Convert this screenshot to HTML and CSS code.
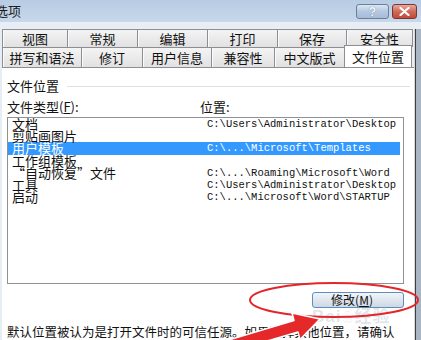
FILE: index.html
```html
<!DOCTYPE html>
<html>

<head>
    <meta charset="UTF-8">
    <title>选项</title>
    <link rel="stylesheet" href="styles.css">
</head>

<body>
    <div class="window">
        <div class="titlebar">
            <span class="title">选项</span>
            <div class="caption">
                <span class="cap-btn help">?</span>
                <span class="cap-btn close">
                    <svg width="11" height="9" viewBox="0 0 11 9"><path d="M1.5 1 L9.5 8 M9.5 1 L1.5 8" stroke="#fff" stroke-width="2.2" stroke-linecap="round"/></svg>
                </span>
            </div>
        </div>
        <div class="frame">
            <div class="client">
                <div class="tab-row row1">
                    <span class="tab w66">视图</span>
                    <span class="tab w70">常规</span>
                    <span class="tab w70">编辑</span>
                    <span class="tab w70">打印</span>
                    <span class="tab w69">保存</span>
                    <span class="tab w66">安全性</span>
                </div>
                <div class="tab-row row2">
                    <span class="tab w80">拼写和语法</span>
                    <span class="tab w61">修订</span>
                    <span class="tab w69">用户信息</span>
                    <span class="tab w63">兼容性</span>
                    <span class="tab w70">中文版式</span>
                    <span class="tab w68 active">文件位置</span>
                </div>
                <div class="panel">
                    <div class="group-title"><span>文件位置</span></div>
                    <div class="list-head">
                        <span class="col-type">文件类型(<u>F</u>):</span>
                        <span>位置:</span>
                    </div>
                    <div class="list">
                        <div class="row"><span class="type">文档</span><span class="path">C:\Users\Administrator\Desktop</span></div>
                        <div class="row"><span class="type">剪贴画图片</span><span class="path"></span></div>
                        <div class="row selected"><span class="type">用户模板</span><span class="path">C:\...\Microsoft\Templates</span></div>
                        <div class="row"><span class="type">工作组模板</span><span class="path"></span></div>
                        <div class="row"><span class="type">“自动恢复”文件</span><span class="path">C:\...\Roaming\Microsoft\Word</span></div>
                        <div class="row"><span class="type">工具</span><span class="path">C:\Users\Administrator\Desktop</span></div>
                        <div class="row"><span class="type">启动</span><span class="path">C:\...\Microsoft\Word\STARTUP</span></div>
                    </div>
                    <div class="actions">
                        <button class="modify">修改(<u>M</u>)</button>
                    </div>
                    <p class="note">默认位置被认为是打开文件时的可信任源。如果选择其他位置，请确认</p>
                </div>
            </div>
            <div class="edge"></div>
        </div>

        <div class="watermark">Bai<span class="paw">❀</span>经验</div>

        <svg class="markup" width="421" height="340" viewBox="0 0 421 340">
            <ellipse cx="334" cy="300" rx="84" ry="17" fill="none" stroke="#e3262a" stroke-width="2"/>
            <polygon points="222,342 294,320.5 292,313 320,319 300,339.6 298,332 226,353" fill="#e5292b" stroke="#fff" stroke-width="1.5" stroke-linejoin="round"/>
        </svg>
    </div>
</body>
</html>
```

FILE: styles.css
```css
* {
    box-sizing: border-box;
}
body {
    margin: 0;
    width: 421px;
    height: 340px;
    overflow: hidden;
    background: #ffffff;
    font-family: "Noto Sans CJK SC", "Liberation Sans", sans-serif;
    color: #111;
}
.window {
    position: relative;
    width: 421px;
    height: 340px;
    display: flex;
    flex-direction: column;
    background: #e6edf5;
}
.titlebar {
    height: 29px;
    display: flex;
    align-items: flex-start;
    justify-content: space-between;
    background: linear-gradient(#b7cbe3 0, #c8d8eb 22px, #e9eef5 22px);
}
.title {
    margin-left: -5px;
    font-size: 13px;
    line-height: 22px;
    color: #1b1b1b;
}
.caption {
    display: flex;
    gap: 3px;
    padding-top: 4px;
    padding-right: 4px;
}
.cap-btn {
    height: 15px;
    display: flex;
    align-items: center;
    justify-content: center;
    border: 1px solid #6d7f96;
    border-radius: 3px;
}
.help {
    width: 33px;
    background: linear-gradient(#dbe6f3, #b4c8e0 50%, #a6bcd8);
    color: #f4f7fb;
    font-family: "Liberation Sans", sans-serif;
    font-weight: bold;
    font-size: 12px;
    text-shadow: 0 0 1px #50698a;
}
.close {
    width: 25px;
    border-color: #7a3632;
    background: linear-gradient(#e9a99b, #cf6a58 50%, #c4493a);
}
.frame {
    flex: 1;
    display: flex;
}
.client {
    flex: 1;
    margin-left: 2px;
    display: flex;
    flex-direction: column;
    background: #e9eef5;
}
.edge {
    width: 7px;
    background: linear-gradient(to right, #d8d8d8 0 1px, #3f3f3f 1px 2px, #aab6c4 2px);
}
.tab-row {
    display: flex;
}
.row1 {
    height: 18px;
}
.row2 {
    height: 20px;
}
.tab {
    display: flex;
    align-items: center;
    justify-content: center;
    font-size: 13px;
    color: #111;
    background: linear-gradient(#f4f4f4, #e1e1e1);
    border-top: 1px solid #8c8e94;
    border-right: 1px solid #8c8e94;
    box-shadow: inset 1px 0 0 #fbfbfb;
}
.tab:first-child {
    border-left: 1px solid #8c8e94;
}
.tab.active {
    position: relative;
    z-index: 1;
    height: 22px;
    margin-top: -2px;
    background: #ffffff;
    border-left: 1px solid #8c8e94;
    margin-left: -1px;
    box-shadow: none;
}
.w61 { width: 61px; }
.w63 { width: 63px; }
.w66 { width: 66px; }
.w68 { width: 68px; }
.w69 { width: 69px; }
.w70 { width: 70px; }
.w80 { width: 80px; }
.panel {
    flex: 1;
    background: #ffffff;
    border-top: 1px solid #8c8e94;
    padding: 10px 0 0 5px;
}
.group-title {
    display: flex;
    align-items: center;
    gap: 8px;
    font-size: 13px;
    line-height: 16px;
    padding-right: 4px;
}
.group-title::after {
    content: "";
    flex: 1;
    height: 1px;
    background: #dcdfe3;
}
.list-head {
    display: flex;
    margin-top: 5px;
    font-size: 13px;
    line-height: 16px;
}
.list-head u {
    text-decoration: underline;
}
.col-type {
    width: 193px;
}
.list {
    width: 397px;
    height: 167px;
    margin-top: 2px;
    border: 1px solid #8e9197;
    padding-top: 0;
}
.row {
    display: flex;
    align-items: center;
    height: 12.2px;
    margin-right: 3px;
}
.type {
    width: 199px;
    padding-left: 4px;
    font-size: 13px;
    line-height: 12px;
    white-space: nowrap;
}
.path {
    font-family: "Liberation Mono", monospace;
    font-size: 10.5px;
    line-height: 12px;
    white-space: nowrap;
}
.selected {
    background: #3399ff;
    color: #ffffff;
}
.actions {
    width: 397px;
    display: flex;
    justify-content: flex-end;
    margin-top: 8px;
}
.modify {
    width: 92px;
    height: 16px;
    padding: 0 12px 0 0;
    border: 1px solid #5c8fbf;
    border-radius: 3px;
    background: linear-gradient(#f1f6fb, #dfe6ee 50%, #cfd8e2);
    font-family: "Noto Sans CJK SC", sans-serif;
    font-size: 12px;
    line-height: 14px;
    color: #111;
}
.note {
    margin: 16px 0 0 0;
    font-size: 12.5px;
    line-height: 16px;
    white-space: nowrap;
}
.watermark {
    position: absolute;
    left: 312px;
    top: 302px;
    font-family: "Liberation Sans", "Noto Sans CJK SC", sans-serif;
    font-size: 17px;
    font-weight: bold;
    color: rgba(170, 185, 200, 0.35);
    letter-spacing: 1px;
}
.paw {
    font-size: 12px;
}
.markup {
    position: absolute;
    left: 0;
    top: 0;
    pointer-events: none;
}
```
